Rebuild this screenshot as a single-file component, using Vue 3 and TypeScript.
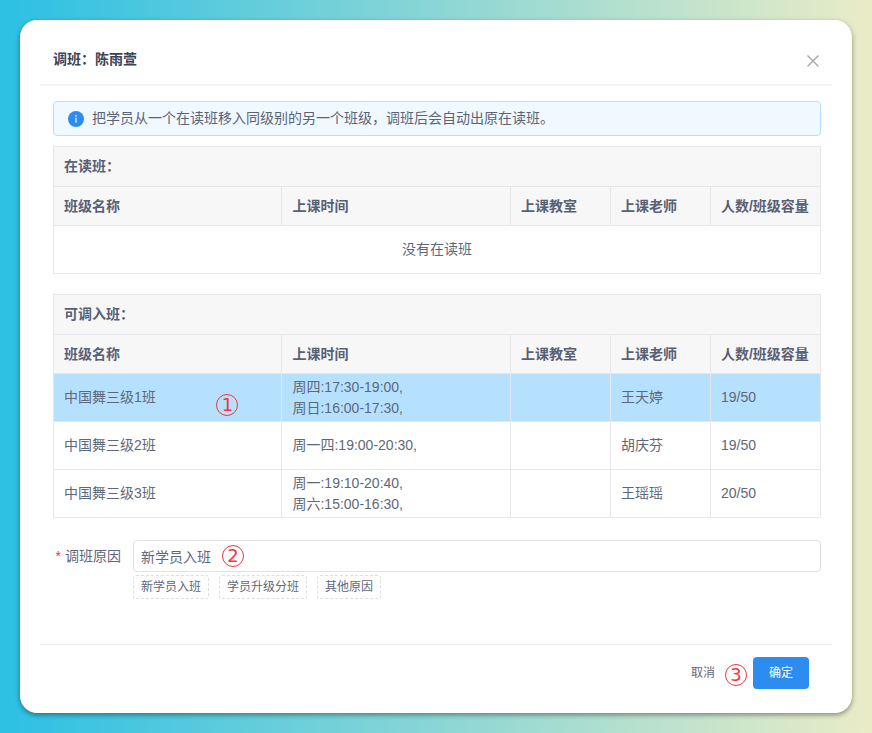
<script setup lang="ts">
import { ref } from 'vue'

interface ClassRow {
  name: string
  times: string[]
  room: string
  teacher: string
  count: string
}

const columns: string[] = ['班级名称', '上课时间', '上课教室', '上课老师', '人数/班级容量']

const classes: ClassRow[] = [
  { name: '中国舞三级1班', times: ['周四:17:30-19:00,', '周日:16:00-17:30,'], room: '', teacher: '王天婷', count: '19/50' },
  { name: '中国舞三级2班', times: ['周一四:19:00-20:30,'], room: '', teacher: '胡庆芬', count: '19/50' },
  { name: '中国舞三级3班', times: ['周一:19:10-20:40,', '周六:15:00-16:30,'], room: '', teacher: '王瑶瑶', count: '20/50' },
]

const presets: string[] = ['新学员入班', '学员升级分班', '其他原因']

const selected = ref(0)
const reason = ref('新学员入班')
</script>

<template>
  <div class="page">
    <main class="modal">
      <header class="modal-header">
        <h1>调班：陈雨萱</h1>
        <button class="close" type="button" aria-label="关闭">
          <svg viewBox="0 0 14 14" width="14" height="14">
            <path d="M1.5 1.5 12.5 12.5M12.5 1.5 1.5 12.5" fill="none" stroke="#a6a6a6" stroke-width="1.4" />
          </svg>
        </button>
      </header>

      <div class="modal-body">
        <div class="alert">
          <svg viewBox="0 0 16 16" width="16" height="16">
            <circle cx="8" cy="8" r="8" fill="#2d8cf0" />
            <circle cx="8" cy="4.8" r="0.9" fill="#d5e8fc" />
            <path d="M8 6.8v5" stroke="#d5e8fc" stroke-width="1.4" />
          </svg>
          <span>把学员从一个在读班移入同级别的另一个班级，调班后会自动出原在读班。</span>
        </div>

        <table class="grid">
          <colgroup>
            <col /><col /><col class="mid" /><col class="mid" /><col class="last" />
          </colgroup>
          <thead>
            <tr class="title"><th colspan="5">在读班：</th></tr>
            <tr><th v-for="c in columns" :key="c">{{ c }}</th></tr>
          </thead>
          <tbody>
            <tr><td class="empty" colspan="5">没有在读班</td></tr>
          </tbody>
        </table>

        <table class="grid">
          <colgroup>
            <col /><col /><col class="mid" /><col class="mid" /><col class="last" />
          </colgroup>
          <thead>
            <tr class="title"><th colspan="5">可调入班：</th></tr>
            <tr><th v-for="c in columns" :key="c">{{ c }}</th></tr>
          </thead>
          <tbody>
            <tr
              v-for="(row, i) in classes"
              :key="row.name"
              :class="{ selected: selected === i }"
              @click="selected = i"
            >
              <td class="name">
                {{ row.name }}
                <span v-if="i === 0" class="mark mark-row">1</span>
              </td>
              <td><div v-for="t in row.times" :key="t">{{ t }}</div></td>
              <td>{{ row.room }}</td>
              <td>{{ row.teacher }}</td>
              <td>{{ row.count }}</td>
            </tr>
          </tbody>
        </table>

        <div class="form-item">
          <label for="reason"><span class="star">*</span>调班原因</label>
          <div class="field">
            <div class="input-wrap">
              <input id="reason" v-model="reason" type="text" />
              <span class="mark mark-input">2</span>
            </div>
            <div class="tags">
              <button v-for="p in presets" :key="p" type="button" @click="reason = p">{{ p }}</button>
            </div>
          </div>
        </div>
      </div>

      <footer class="modal-footer">
        <button class="cancel" type="button">取消</button>
        <span class="mark mark-footer">3</span>
        <button class="confirm" type="button">确定</button>
      </footer>
    </main>
  </div>
</template>

<style>
body {
  margin: 0;
}
</style>

<style scoped>
.page {
  box-sizing: border-box;
  min-height: 100vh;
  padding: 20px;
  background: linear-gradient(90deg, #2bc0e4, #eaecc6);
  font-family: 'Liberation Sans', 'Noto Sans CJK SC', sans-serif;
  font-size: 14px;
  line-height: 21px;
  color: #5f677b;
}

.page * {
  box-sizing: border-box;
}

button,
input {
  font: inherit;
  color: inherit;
}

button {
  padding: 0;
  border: 0;
  background: none;
  cursor: pointer;
}

.modal {
  padding: 0 20px;
  border-radius: 17px;
  background: #fff;
  box-shadow: 0 2px 5px rgba(0, 0, 0, 0.4);
}

.modal-header {
  display: flex;
  align-items: center;
  justify-content: space-between;
  height: 66px;
  padding: 14px 12px 0 13px;
  border-bottom: 2px solid #f3f3f4;
}

h1 {
  margin: 0;
  font-size: 14px;
  font-weight: 700;
  color: #3a435a;
}

.close {
  display: flex;
  padding: 3px 0 0;
}

.modal-body {
  padding: 15px 11px 0 13px;
}

.alert {
  display: flex;
  align-items: center;
  gap: 8px;
  height: 35px;
  margin-bottom: 10px;
  padding: 0 14px;
  border: 1px solid #b5e0fe;
  border-radius: 4px;
  background: #f0f9ff;
  color: #5c6474;
}

.grid {
  width: 100%;
  margin-bottom: 20px;
  table-layout: fixed;
  border-collapse: collapse;
  border: 1px solid #e2e4e7;
}

.mid {
  width: 100px;
}

.last {
  width: 110px;
}

.grid th,
.grid td {
  padding: 0 10px;
  border: 1px solid #e6e7ea;
  text-align: left;
}

.grid th {
  height: 39px;
  background: #f7f7f8;
  color: #586074;
  font-weight: 700;
  white-space: nowrap;
}

.grid .title th {
  height: 40px;
}

.grid td {
  height: 48px;
}

.grid td.empty {
  text-align: center;
}

.grid .name {
  position: relative;
}

.grid .selected td {
  background: #b5e1ff;
}

.mark {
  width: 22px;
  height: 22px;
  border: 1px solid #f0383c;
  border-radius: 50%;
  font-family: 'DejaVu Sans', sans-serif;
  font-size: 18px;
  line-height: 20px;
  text-align: center;
  color: #f0383c;
}

.mark-row {
  position: absolute;
  right: 43px;
  top: 20px;
}

.mark-input {
  position: absolute;
  left: 89px;
  top: 5px;
}

.mark-footer {
  margin-top: 4px;
}

.form-item {
  display: flex;
  gap: 12px;
  padding-top: 2px;
}

.form-item label {
  flex: 0 0 68px;
  line-height: 32px;
  text-align: right;
  white-space: nowrap;
}

.star {
  margin-right: 4px;
  font-size: 14px;
  color: #ed4014;
}

.field {
  flex: 1;
  min-width: 0;
}

.input-wrap {
  position: relative;
}

.input-wrap input {
  display: block;
  width: 100%;
  height: 32px;
  padding: 0 7px;
  border: 1px solid #dfe1e6;
  border-radius: 4px;
  background: #fff;
  outline: none;
}

.tags {
  display: flex;
  flex-wrap: wrap;
  gap: 10px;
  margin-top: 3px;
}

.tags button {
  height: 24px;
  padding: 0 7px;
  border: 1px dashed #dcdee2;
  border-radius: 3px;
  font-size: 12px;
  line-height: 20px;
}

.modal-footer {
  display: flex;
  align-items: center;
  justify-content: flex-end;
  height: 69px;
  margin-top: 45px;
  padding: 0 23px 12px 0;
  border-top: 1px solid #ececee;
  font-size: 12px;
}

.cancel {
  margin-right: 10px;
}

.confirm {
  width: 56px;
  height: 32px;
  margin-left: 6px;
  border-radius: 4px;
  background: #2d8cf0;
  color: #fff;
}
</style>
